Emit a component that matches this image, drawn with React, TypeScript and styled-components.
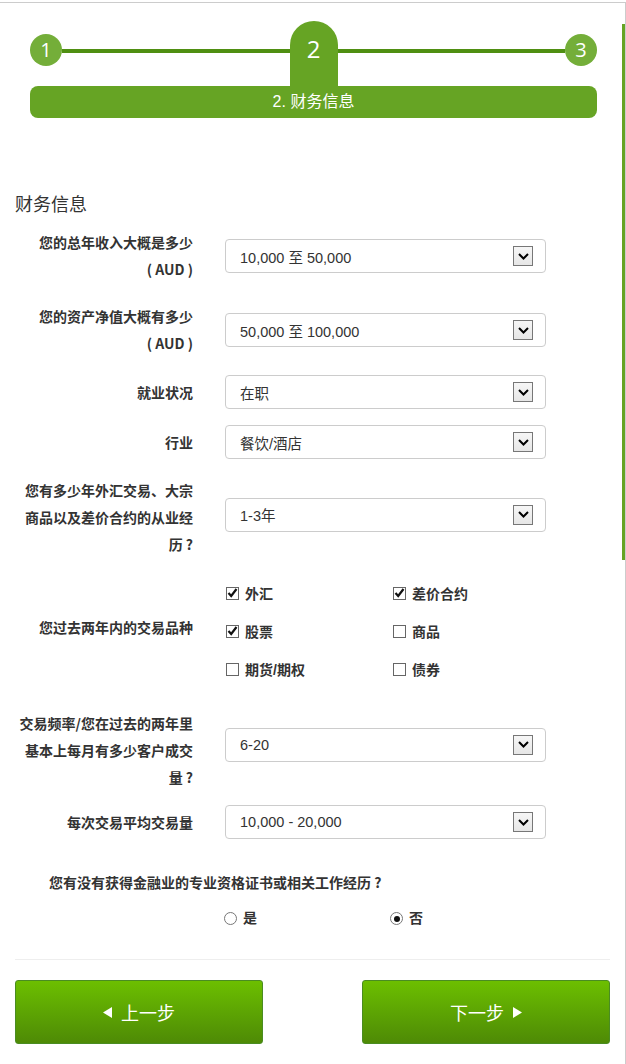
import React from "react";
import styled, { createGlobalStyle } from "styled-components";

const GlobalStyle = createGlobalStyle`
  body {
    margin: 0;
    background: #fff;
    font-family: "Liberation Sans", "Noto Sans CJK SC", sans-serif;
    color: #333;
  }
`;

// mt: space above the row, lift: how far the select sits above the label's centre
type Field = { label: React.ReactNode; value: string; mt: number; lift?: number };

const topFields: Field[] = [
  { label: <>您的总年收入大概是多少<br />( AUD )</>, value: "10,000 至 50,000", mt: 0 },
  { label: <>您的资产净值大概有多少<br />( AUD )</>, value: "50,000 至 100,000", mt: 20 },
  { label: "就业状况", value: "在职", mt: 18 },
  { label: "行业", value: "餐饮/酒店", mt: 16 },
  { label: "您有多少年外汇交易、大宗商品以及差价合约的从业经历 ?", value: "1-3年", mt: 18, lift: 3 },
];

const bottomFields: Field[] = [
  { label: "交易频率/您在过去的两年里基本上每月有多少客户成交量 ?", value: "6-20", mt: 22, lift: 6 },
  { label: "每次交易平均交易量", value: "10,000 - 20,000", mt: 14 },
];

const products = [
  { name: "外汇", checked: true },
  { name: "差价合约", checked: true },
  { name: "股票", checked: true },
  { name: "商品", checked: false },
  { name: "期货/期权", checked: false },
  { name: "债券", checked: false },
];

const Chevron = () => (
  <svg width="11" height="7" viewBox="0 0 11 7">
    <path d="M1 1 L5.5 5.5 L10 1" fill="none" stroke="#000" strokeWidth="2" />
  </svg>
);

const Check = () => (
  <svg width="11" height="10" viewBox="0 0 11 10">
    <path d="M1.5 5 L4.2 8 L9.5 1" fill="none" stroke="#111" strokeWidth="2.2" />
  </svg>
);

const Triangle = ({ dir }: { dir: "left" | "right" }) => (
  <svg width="9" height="11" viewBox="0 0 9 11">
    <polygon points={dir === "left" ? "9,0 9,11 0,5.5" : "0,0 0,11 9,5.5"} fill="#fff" />
  </svg>
);

const SelectRow = ({ label, value, mt, lift = 0 }: Field) => (
  <Row $mt={mt}>
    <Label>{label}</Label>
    <FakeSelect $lift={lift}>
      <span>{value}</span>
      <ArrowBox>
        <Chevron />
      </ArrowBox>
    </FakeSelect>
  </Row>
);

export default function App() {
  return (
    <>
      <GlobalStyle />
      <Frame>
        <ScrollThumb />
        <Stepper>
          <Track>
            <StepCircle>1</StepCircle>
            <StepLine />
            <ActiveTab>2</ActiveTab>
            <StepLine />
            <StepCircle>3</StepCircle>
          </Track>
          <StepBar>2. 财务信息</StepBar>
        </Stepper>

        <SectionTitle>财务信息</SectionTitle>

        <Form>
          {topFields.map((f, i) => (
            <SelectRow key={i} {...f} />
          ))}
          <Row $mt={16}>
            <Label $lift={8}>您过去两年内的交易品种</Label>
            <CheckGrid>
              {products.map((p) => (
                <CheckItem key={p.name}>
                  <CheckBox>{p.checked && <Check />}</CheckBox>
                  {p.name}
                </CheckItem>
              ))}
            </CheckGrid>
          </Row>
          {bottomFields.map((f, i) => (
            <SelectRow key={i} {...f} />
          ))}
        </Form>

        <Question>您有没有获得金融业的专业资格证书或相关工作经历 ?</Question>
        <RadioRow>
          <RadioItem>
            <Radio />是
          </RadioItem>
          <RadioItem>
            <Radio $checked />否
          </RadioItem>
        </RadioRow>

        <Divider />

        <ButtonRow>
          <NavButton>
            <Triangle dir="left" />
            上一步
          </NavButton>
          <NavButton>
            下一步
            <Triangle dir="right" />
          </NavButton>
        </ButtonRow>
      </Frame>
    </>
  );
}

const Frame = styled.div`
  position: relative;
  box-sizing: border-box;
  width: 626px;
  height: 1062px;
  margin-top: 2px;
  padding: 18px 15px 0 15px;
  border-top: 1px solid #cccccc;
  border-right: 1px solid #cccccc;
  overflow: hidden;
`;

const ScrollThumb = styled.div`
  position: absolute;
  top: 21px;
  right: 0;
  width: 3px;
  height: 536px;
  background: #66a424;
`;

const Stepper = styled.div`
  margin: 0 13px 0 15px;
`;

const Track = styled.div`
  display: flex;
  align-items: flex-start;
  height: 65px;
`;

const StepCircle = styled.div`
  width: 32px;
  height: 32px;
  margin-top: 13px;
  border-radius: 50%;
  background: #74ae39;
  color: #fff;
  font-size: 20px;
  line-height: 32px;
  text-align: center;
  font-family: "Open Sans", "Liberation Sans", sans-serif;
`;

const StepLine = styled.div`
  flex: 1;
  height: 4px;
  margin-top: 28px;
  background: #4f8f12;
`;

const ActiveTab = styled.div`
  width: 48px;
  height: 65px;
  border-radius: 24px 24px 0 0;
  background: #66a424;
  color: #fff;
  font-size: 24px;
  line-height: 56px;
  text-align: center;
  font-family: "Open Sans", "Liberation Sans", sans-serif;
`;

const StepBar = styled.div`
  height: 32px;
  border-radius: 8px;
  background: #66a424;
  color: #fff;
  font-size: 16px;
  line-height: 32px;
  text-align: center;
`;

const SectionTitle = styled.h2`
  margin: 75px 0 12px 0;
  font-size: 18px;
  font-weight: normal;
  line-height: 24px;
  color: #333;
`;

const Form = styled.div`
  display: flex;
  flex-direction: column;
`;

const Row = styled.div<{ $mt: number }>`
  display: flex;
  align-items: center;
  gap: 32px;
  margin-top: ${(p) => p.$mt}px;
`;

const Label = styled.div<{ $lift?: number }>`
  box-sizing: border-box;
  flex: 0 0 178px;
  padding-left: 2px;
  margin-bottom: ${(p) => p.$lift ?? 0}px;
  text-align: right;
  font-family: "Noto Sans CJK SC", "Liberation Sans", sans-serif;
  font-size: 14px;
  font-weight: bold;
  line-height: 27px;
  color: #333;
`;

const FakeSelect = styled.div<{ $lift: number }>`
  box-sizing: border-box;
  display: flex;
  align-items: center;
  justify-content: space-between;
  width: 321px;
  height: 34px;
  margin-bottom: ${(p) => p.$lift * 2}px;
  padding: 0 12px 0 14px;
  border: 1px solid #cccccc;
  border-radius: 4px;
  font-size: 14.5px;
  color: #333;
`;

const ArrowBox = styled.span`
  box-sizing: border-box;
  display: flex;
  align-items: center;
  justify-content: center;
  width: 20px;
  height: 20px;
  border: 1px solid #777;
  background: linear-gradient(#f6f6f6, #e6e6e6);
`;

const CheckGrid = styled.div`
  display: grid;
  grid-template-columns: 167px 167px;
  grid-auto-rows: 38px;
  align-items: center;
`;

const CheckItem = styled.div`
  display: flex;
  align-items: center;
  gap: 6px;
  font-size: 14px;
  font-weight: bold;
  color: #333;
`;

const CheckBox = styled.span`
  box-sizing: border-box;
  display: flex;
  align-items: center;
  justify-content: center;
  width: 13px;
  height: 13px;
  margin-left: 1px;
  border: 1px solid #666;
  background: #fff;
`;

const Question = styled.div`
  margin: 30px 0 0 34px;
  font-family: "Noto Sans CJK SC", "Liberation Sans", sans-serif;
  font-size: 14px;
  font-weight: bold;
  line-height: 27px;
  color: #333;
`;

const RadioRow = styled.div`
  display: grid;
  grid-template-columns: 166px 166px;
  margin: 9px 0 0 209px;
`;

const RadioItem = styled.label`
  display: flex;
  align-items: center;
  gap: 6px;
  font-size: 14px;
  font-weight: bold;
  line-height: 27px;
  color: #333;
`;

const Radio = styled.span<{ $checked?: boolean }>`
  box-sizing: border-box;
  position: relative;
  width: 13px;
  height: 13px;
  border: 1px solid #777;
  border-radius: 50%;
  background: #fff;

  &::after {
    content: "";
    display: ${(p) => (p.$checked ? "block" : "none")};
    position: absolute;
    left: 2.5px;
    top: 2.5px;
    width: 6px;
    height: 6px;
    border-radius: 50%;
    background: #111;
  }
`;

const Divider = styled.hr`
  margin: 27px 0 0 0;
  border: 0;
  border-top: 1px solid #eeeeee;
`;

const ButtonRow = styled.div`
  display: flex;
  justify-content: space-between;
  margin-top: 20px;
`;

const NavButton = styled.button`
  box-sizing: border-box;
  display: flex;
  align-items: center;
  justify-content: center;
  gap: 9px;
  width: 248px;
  height: 64px;
  border: 1px solid #4a8c22;
  border-radius: 3px;
  background: linear-gradient(#6cbf00, #4e8a06);
  color: #fff;
  font-size: 18px;
  font-family: "Liberation Sans", "Noto Sans CJK SC", sans-serif;
  cursor: pointer;
`;
